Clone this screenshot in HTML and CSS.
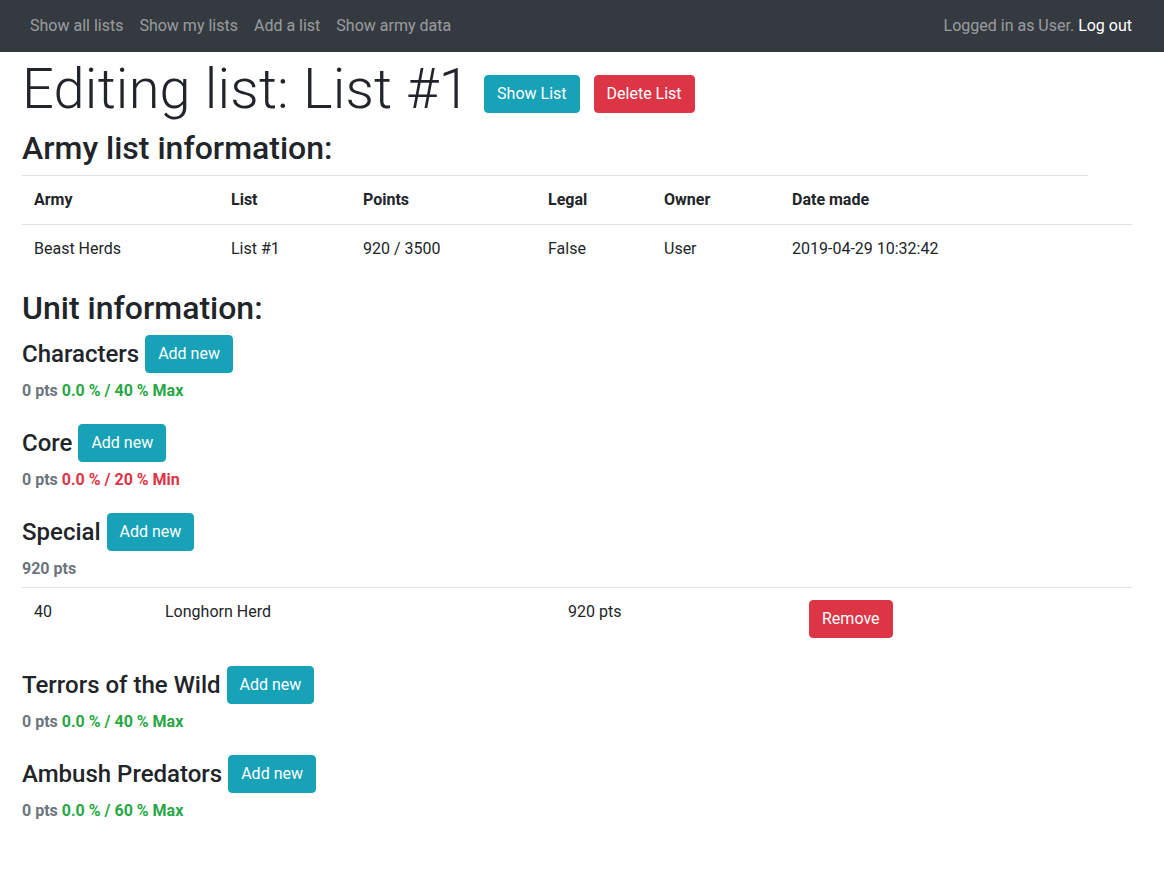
FILE: index.html
```html
<!DOCTYPE html>
<html lang="en">
<head>
<meta charset="utf-8">
<title>Editing list: List #1</title>
<link rel="stylesheet" href="styles.css">
</head>
<body>
<nav class="navbar">
  <div class="nav-left">
    <a class="nav-link" href="#">Show all lists</a>
    <a class="nav-link" href="#">Show my lists</a>
    <a class="nav-link" href="#">Add a list</a>
    <a class="nav-link" href="#">Show army data</a>
  </div>
  <div class="nav-right">Logged in as User. <a class="nav-logout" href="#">Log out</a></div>
</nav>

<main class="page">
  <div class="title-row">
    <h1 class="title">Editing list: List #1</h1>
    <a class="btn btn-info title-btn" href="#">Show List</a>
    <a class="btn btn-danger title-btn" href="#">Delete List</a>
  </div>

  <h2 class="section-title">Army list information:</h2>
  <table class="table info-table">
    <colgroup>
      <col class="c-army"><col class="c-list"><col class="c-points"><col class="c-legal"><col class="c-owner"><col class="c-date"><col class="c-extra">
    </colgroup>
    <thead>
      <tr><th>Army</th><th>List</th><th>Points</th><th>Legal</th><th>Owner</th><th>Date made</th></tr>
    </thead>
    <tbody>
      <tr><td>Beast Herds</td><td>List #1</td><td>920 / 3500</td><td>False</td><td>User</td><td>2019-04-29 10:32:42</td><td></td></tr>
    </tbody>
  </table>

  <h2 class="section-title unit-title">Unit information:</h2>

  <section class="category">
    <div class="cat-head"><h4 class="cat-name">Characters</h4><a class="btn btn-info" href="#">Add new</a></div>
    <div class="pts">0 pts <span class="ok">0.0 % / 40 % Max</span></div>
  </section>

  <section class="category">
    <div class="cat-head"><h4 class="cat-name">Core</h4><a class="btn btn-info" href="#">Add new</a></div>
    <div class="pts">0 pts <span class="bad">0.0 % / 20 % Min</span></div>
  </section>

  <section class="category">
    <div class="cat-head"><h4 class="cat-name">Special</h4><a class="btn btn-info" href="#">Add new</a></div>
    <div class="pts">920 pts</div>
    <table class="table unit-table">
      <colgroup><col class="u-num"><col class="u-name"><col class="u-pts"><col class="u-act"></colgroup>
      <tbody>
        <tr><td>40</td><td>Longhorn Herd</td><td>920 pts</td><td><a class="btn btn-danger" href="#">Remove</a></td></tr>
      </tbody>
    </table>
  </section>

  <section class="category">
    <div class="cat-head"><h4 class="cat-name">Terrors of the Wild</h4><a class="btn btn-info" href="#">Add new</a></div>
    <div class="pts">0 pts <span class="ok">0.0 % / 40 % Max</span></div>
  </section>

  <section class="category">
    <div class="cat-head"><h4 class="cat-name">Ambush Predators</h4><a class="btn btn-info" href="#">Add new</a></div>
    <div class="pts">0 pts <span class="ok">0.0 % / 60 % Max</span></div>
  </section>
</main>
</body>
</html>
```

FILE: styles.css
```css
* { box-sizing: border-box; }

body {
  margin: 0;
  font-family: Roboto, "Liberation Sans", Arial, sans-serif;
  font-size: 16px;
  line-height: 24px;
  color: #212529;
  background: #fff;
}

a { text-decoration: none; }

.navbar {
  display: flex;
  justify-content: space-between;
  align-items: center;
  height: 52px;
  padding: 0 32px 0 22px;
  background: #343a40;
}

.nav-left { display: flex; }

.nav-link {
  padding: 0 8px;
  color: rgba(255, 255, 255, 0.5);
}

.nav-right { color: rgba(255, 255, 255, 0.5); }

.nav-logout { color: #fff; }

.page {
  padding: 0 32px 40px 22px;
}

.title-row {
  display: flex;
  align-items: center;
  margin-top: 4px;
  margin-bottom: 6px;
}

.title {
  margin: 0 14px 0 0;
  font-size: 56px;
  font-weight: 300;
  line-height: 67px;
  letter-spacing: 0.2px;
}

.title-btn { margin-top: 9px; }
.title-btn + .title-btn { margin-left: 14px; }

.btn {
  display: inline-block;
  height: 38px;
  padding: 6px 12px;
  border: 1px solid transparent;
  border-radius: 4px;
  font-size: 16px;
  line-height: 24px;
  font-weight: 400;
  color: #fff;
  white-space: nowrap;
}

.btn-info { background: #17a2b8; border-color: #17a2b8; }
.btn-danger { background: #dc3545; border-color: #dc3545; }

.section-title {
  margin: 0 0 8px;
  font-size: 32px;
  font-weight: 500;
  line-height: 38px;
}

.unit-title { margin-bottom: 8px; }

.table {
  width: 100%;
  border-collapse: collapse;
  table-layout: fixed;
}

.table th,
.table td {
  padding: 12px;
  text-align: left;
  vertical-align: top;
  border-top: 1px solid #dee2e6;
}

.table th { font-weight: 700; }

.info-table { margin-bottom: 16px; }

.c-army { width: 197px; }
.c-list { width: 132px; }
.c-points { width: 185px; }
.c-legal { width: 116px; }
.c-owner { width: 128px; }
.c-date { width: 308px; }
.c-extra { width: 44px; }

.category { padding-bottom: 15px; }

.cat-head {
  display: flex;
  align-items: center;
  gap: 6px;
}

.cat-name {
  margin: 0;
  font-size: 24px;
  font-weight: 500;
  line-height: 29px;
}

.pts {
  margin-top: 6px;
  padding-bottom: 6px;
  font-weight: 700;
  color: #6c757d;
}

.ok { color: #28a745; }
.bad { color: #dc3545; }

.unit-table { margin-bottom: 1px; }

.u-num { width: 131px; }
.u-name { width: 403px; }
.u-pts { width: 241px; }
.u-act { width: 335px; }
```
